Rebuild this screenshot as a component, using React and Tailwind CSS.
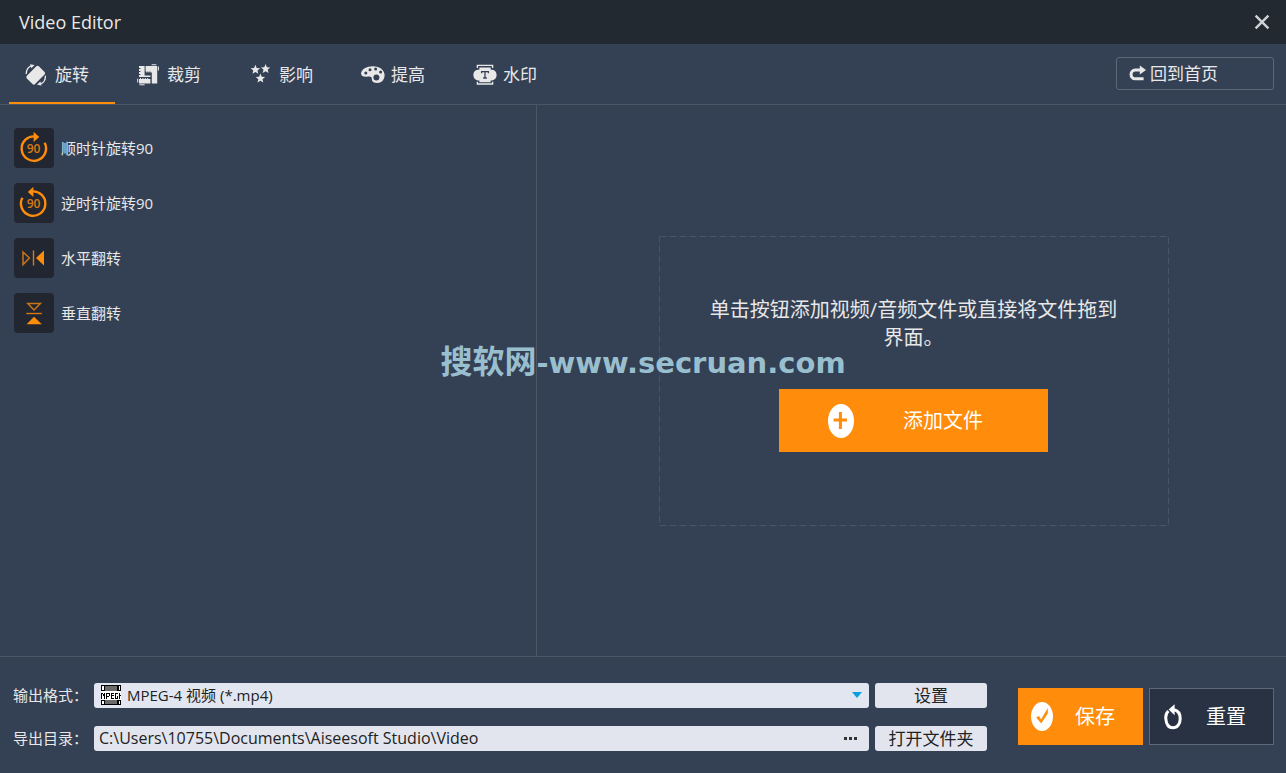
import { useState } from 'react';

const LIGHT = '#e8e8e8';
const ORANGE = '#ff8c0a';

function RotateIcon() {
  return (
    <svg width="22" height="22" viewBox="0 0 22 22" aria-hidden="true">
      <rect x="2.2" y="5.4" width="17" height="11.6" rx="1.8" fill={LIGHT} transform="rotate(-45 10.7 11.2)" />
      <path d="M1.2 10 C1.2 6 3 3 6.5 1.8" fill="none" stroke={LIGHT} strokeWidth="1.3" />
      <path d="M5 .2 L9.6 1 L6.4 4.2 Z" fill={LIGHT} />
      <path d="M20.4 11.6 C20.6 15.6 18.6 18.8 15.4 20" fill="none" stroke={LIGHT} strokeWidth="1.3" />
      <path d="M16.6 21.6 L12 20.8 L15.4 17.6 Z" fill={LIGHT} />
    </svg>
  );
}

function CropIcon() {
  return (
    <svg width="22" height="22" viewBox="0 0 22 22" fill={LIGHT} aria-hidden="true">
      <path d="M2 2 H7.6 V11.6 H13.4 V13 H2 V11 H3.4 V10 H2 V8 H3.4 V7 H2 V5 H3.4 V4 H2 Z" />
      <path d="M2 15 H3 V14 H4 V15 H5.4 V14 H6.4 V15 H7.8 V14 H8.8 V15 H10.2 V14 H11.2 V15 H13.4 V19.6 H2 Z" />
      <path d="M8.6 2 H20.2 V19.6 H14.8 V8.6 H13.4 V7.4 H12.4 V8.4 H11.4 V7.4 H10.4 V8.4 H9.4 V7.4 H8.6 Z" />
      <path d="M14.6 .2 H19.4 V1.2 H14.6 Z M20.9 2.4 H21.9 V6.4 H20.9 Z M.2 14.8 H1.2 V18.6 H.2 Z M2.4 20.2 H7.6 V21.2 H2.4 Z" />
    </svg>
  );
}

function StarsIcon() {
  const star = 'M0 -4.8 L1.3 -1.6 L4.7 -1.4 L2.1 .8 L2.9 4.2 L0 2.4 L-2.9 4.2 L-2.1 .8 L-4.7 -1.4 L-1.3 -1.6 Z';
  return (
    <svg width="22" height="22" viewBox="0 0 22 22" fill={LIGHT} aria-hidden="true">
      <path d={star} transform="translate(6.4 5.6)" />
      <path d={star} transform="translate(16.6 4.8)" />
      <path d={star} transform="translate(11.4 14.4)" />
    </svg>
  );
}

function PaletteIcon() {
  return (
    <svg width="24" height="22" viewBox="0 0 24 22" aria-hidden="true">
      <path
        d="M0 9.6 C.4 5.2 5.6 2.2 12 2.2 C18.8 2.2 23.6 6.2 23.6 11 C23.6 16 20.2 19 16.4 19 C12.6 19 10.8 17.4 10.8 15 C10.8 12.8 9.6 12.2 7 12.6 C3.4 13.2 .2 12.6 0 9.6 Z"
        fill={LIGHT}
      />
      <g fill="#344054">
        <circle cx="4.8" cy="9" r="1.5" />
        <circle cx="9" cy="5.8" r="1.5" />
        <circle cx="14.6" cy="5" r="1.5" />
        <circle cx="19.6" cy="8" r="1.5" />
        <circle cx="15.4" cy="13.4" r="3" />
      </g>
    </svg>
  );
}

function StampIcon() {
  return (
    <svg width="24" height="22" viewBox="0 0 24 22" aria-hidden="true">
      <path d="M4.4 4 V1.4 H9 M15 1.4 H19.6 V4 M9 1.4 H15" fill="none" stroke={LIGHT} strokeWidth="1.4" />
      <path d="M6.4 3.6 H17.6 V5.4 C22 5.4 23.6 8.2 23.6 11 C23.6 13.8 22 16.6 17.6 16.6 V18.2 H6.4 V16.6 C2 16.6 .4 13.8 .4 11 C.4 8.2 2 5.4 6.4 5.4 Z" fill={LIGHT} />
      <path d="M4.4 17.8 V20 H19.6 V17.8" fill="none" stroke={LIGHT} strokeWidth="1.4" />
      <path d="M8.6 9.2 V7.6 H15.4 V9.2 M12 7.6 V14 M10.2 14 H13.8" fill="none" stroke="#344054" strokeWidth="1.3" />
    </svg>
  );
}

function Rotate90Icon({ reverse }) {
  return (
    <svg width="40" height="40" viewBox="0 0 40 40" aria-hidden="true">
      <g transform={reverse ? 'translate(39 0) scale(-1 1)' : undefined}>
        <path d="M21.5 8.5 A12.2 12.2 0 1 0 30.6 14.8" fill="none" stroke={ORANGE} strokeWidth="2.4" />
        <path d="M19.6 3.8 L25.2 8.9 L19.6 14 Z" fill={ORANGE} />
      </g>
      <text x="19.5" y="25" textAnchor="middle" fontSize="12" fontWeight="600" fontFamily="Open Sans, sans-serif" fill="#d97a12">
        90
      </text>
    </svg>
  );
}

function FlipHorizontalIcon() {
  return (
    <svg width="40" height="40" viewBox="0 0 40 40" aria-hidden="true">
      <path d="M9 14 L15.4 20 L9 26.6 Z" fill="none" stroke="#c97417" strokeWidth="1.5" />
      <path d="M19.5 12.4 V27.6" stroke="#d97a12" strokeWidth="1.4" />
      <path d="M30 12.4 V27.4 L22 20 Z" fill={ORANGE} />
    </svg>
  );
}

function FlipVerticalIcon() {
  return (
    <svg width="40" height="40" viewBox="0 0 40 40" aria-hidden="true">
      <path d="M13.8 10.6 H26.4 L20 17 Z" fill="none" stroke="#c97417" strokeWidth="1.5" />
      <path d="M12.4 20.5 H27.8" stroke="#d97a12" strokeWidth="1.4" />
      <path d="M12.6 31.2 H27.8 L20 23.8 Z" fill={ORANGE} />
    </svg>
  );
}

function MpegIcon() {
  return (
    <svg width="20" height="20" viewBox="0 0 20 20" shapeRendering="crispEdges" aria-hidden="true">
      <path d="M0 0H20V20H0Z" fill="#000" />
      <path d="M4 1H16V6H4Z M4 15H16V19H4Z" fill="#6b6b6b" />
      <path d="M1 1H3V5H1Z M18 1H19V5H18Z M1 16H3V19H1Z M18 16H19V19H18Z" fill="#fff" />
      <path d="M0 6H20V15H0Z" fill="#fff" />
      <path
        d="M0 8H1V14H0Z M1 8H2V9H1Z M2 9H3V11H2Z M3 8H4V14H3Z M5 8H6V14H5Z M6 8H8V9H6Z M8 8H9V11H8Z M6 11H8V12H6Z M10 8H11V14H10Z M11 8H13V9H11Z M11 10H13V11H11Z M11 13H13V14H11Z M14 8H15V14H14Z M15 8H17V9H15Z M15 13H17V14H15Z M16 11H17V13H16Z M18 8H19V14H18Z M19 10H20V11H19Z"
        fill="#000"
      />
    </svg>
  );
}

function ReturnIcon() {
  return (
    <svg width="18" height="18" viewBox="0 0 18 18" aria-hidden="true">
      <path d="M12 5 H6.4 C.6 5 .6 13.8 6.4 13.8 H14.6" fill="none" stroke={LIGHT} strokeWidth="3" />
      <path d="M10.8 .4 L17 5 L10.8 9.6 Z" fill={LIGHT} />
    </svg>
  );
}

function CloseIcon() {
  return (
    <svg width="16" height="16" viewBox="0 0 16 16" aria-hidden="true">
      <path d="M1.6 1.6 L14.4 14.4 M14.4 1.6 L1.6 14.4" stroke="#d0d3d6" strokeWidth="2.4" />
    </svg>
  );
}

function PlusIcon() {
  return (
    <svg width="26" height="34" viewBox="0 0 26 34" aria-hidden="true">
      <ellipse cx="13" cy="17" rx="13" ry="17" fill="#fff" />
      <path d="M5.6 16 H19 M12.4 8 V25" stroke={ORANGE} strokeWidth="3" />
    </svg>
  );
}

function CheckIcon() {
  return (
    <svg width="22" height="29" viewBox="0 0 22 29" aria-hidden="true">
      <ellipse cx="11" cy="14.5" rx="11" ry="14.5" fill="#fff" />
      <path d="M5.2 15.4 L8 14 L10 17.4 L16.8 6 V11.4 L10.2 21.6 Z" fill={ORANGE} />
    </svg>
  );
}

function ResetIcon() {
  return (
    <svg width="18" height="26" viewBox="0 0 18 26" aria-hidden="true">
      <path d="M4.4 7 C1.8 9.4 1.6 12.4 1.8 14.6 C2.2 20.4 5 23.8 9 23.8 C13.4 23.8 16.2 19.8 16.2 14.8 C16.2 10 14 6.6 10 5.8" fill="none" stroke="#fff" strokeWidth="3" />
      <path d="M10.6 .2 V11.2 L4.6 5.6 Z" fill="#fff" />
    </svg>
  );
}

const TABS = [
  { id: 'rotate', label: '旋转', Icon: RotateIcon },
  { id: 'crop', label: '裁剪', Icon: CropIcon },
  { id: 'effect', label: '影响', Icon: StarsIcon },
  { id: 'enhance', label: '提高', Icon: PaletteIcon },
  { id: 'watermark', label: '水印', Icon: StampIcon },
];

const ACTIONS = [
  { label: '顺时针旋转90', icon: <Rotate90Icon /> },
  { label: '逆时针旋转90', icon: <Rotate90Icon reverse /> },
  { label: '水平翻转', icon: <FlipHorizontalIcon /> },
  { label: '垂直翻转', icon: <FlipVerticalIcon /> },
];

export default function App() {
  const [tab, setTab] = useState('rotate');
  const [folder, setFolder] = useState('C:\\Users\\10755\\Documents\\Aiseesoft Studio\\Video');

  return (
    <div className="relative flex min-h-screen flex-col bg-[#344054] font-['Open_Sans','Noto_Sans_CJK_SC',sans-serif] text-[#e8e8e8]">
      <header className="flex h-11 items-center justify-between bg-[#222930] pr-3.5 pl-[19px]">
        <h1 className="text-lg">Video Editor</h1>
        <button type="button" aria-label="Close" className="p-0.5">
          <CloseIcon />
        </button>
      </header>

      <nav className="flex h-[61px] items-stretch justify-between border-b border-[#4a5566] pr-3 pl-[9px]">
        <div className="flex gap-1.5">
          {TABS.map(({ id, label, Icon }) => (
            <button
              key={id}
              type="button"
              onClick={() => setTab(id)}
              className={`flex w-[106px] items-center border-b-2 pt-1 pl-4 text-[17px] ${
                tab === id ? 'border-[#ff8c0a]' : 'border-transparent'
              }`}
            >
              <span className="flex w-[30px] items-center">
                <Icon />
              </span>
              {label}
            </button>
          ))}
        </div>
        <button
          type="button"
          className="mt-[13px] flex h-[33px] w-[158px] items-center gap-[3px] rounded-[3px] border border-[#5d6778] pl-3 text-[17px]"
        >
          <ReturnIcon />
          回到首页
        </button>
      </nav>

      <main className="flex flex-1">
        <section className="flex w-[537px] shrink-0 flex-col items-start gap-[15px] border-r border-[#4a5566] px-3.5 pt-[23px]">
          {ACTIONS.map(({ label, icon }) => (
            <button key={label} type="button" className="flex items-center gap-[7px] text-[15px]">
              <span className="rounded bg-[#212630]">{icon}</span>
              {label}
            </button>
          ))}
        </section>

        <section className="flex flex-1 items-center justify-center pt-px pl-1">
          <div className="relative flex h-[290px] w-[510px] flex-col items-center pt-[60px]">
            <svg className="absolute inset-0 size-full" aria-hidden="true">
              <rect x="0.5" y="0.5" width="509" height="289" fill="none" stroke="#495467" strokeDasharray="7 3" />
            </svg>
            <p className="relative w-[420px] text-center text-xl leading-7">
              单击按钮添加视频/音频文件或直接将文件拖到界面。
            </p>
            <button type="button" className="relative mt-[37px] flex h-[63px] w-[269px] items-center gap-[49px] bg-[#ff8c0a] pl-[49px] text-xl text-white">
              <PlusIcon />
              添加文件
            </button>
          </div>
        </section>
      </main>

      <footer className="flex h-[117px] items-center gap-[31px] border-t border-[#4a5566] pt-[3px] pr-3 pl-[13px]">
        <div className="grid flex-1 grid-cols-[75px_1fr_112px] items-center gap-x-1.5 gap-y-[18px]">
          <label htmlFor="format" className="text-[15px] leading-[25px]">
            输出格式：
          </label>
          <div className="relative flex h-[25px] items-center">
            <select
              id="format"
              className="h-full w-full appearance-none rounded-[3px] bg-[#e1e6f1] pl-[33px] text-[15px] leading-[25px] text-[#222]"
            >
              <option>MPEG-4 视频 (*.mp4)</option>
            </select>
            <span className="pointer-events-none absolute left-[7px]">
              <MpegIcon />
            </span>
            <svg className="pointer-events-none absolute right-[7px]" width="10" height="6" viewBox="0 0 10 6" aria-hidden="true">
              <path d="M0 0 H10 L5 6 Z" fill="#0a9fe0" />
            </svg>
          </div>
          <button type="button" className="h-[25px] rounded-[3px] bg-[#e3e5ee] text-[17px] leading-[25px] text-[#222]">
            设置
          </button>

          <label htmlFor="folder" className="text-[15px] leading-[25px]">
            导出目录：
          </label>
          <div className="flex h-[25px] items-center rounded-[3px] bg-[#e3e5ee] pr-3 pl-[5px] text-[#222]">
            <input
              id="folder"
              value={folder}
              onChange={(e) => setFolder(e.target.value)}
              className="h-full min-w-0 flex-1 bg-transparent text-base outline-none"
            />
            <button type="button" aria-label="Browse" className="flex h-full items-center gap-0.5">
              <span className="size-[3px] bg-[#333]" />
              <span className="size-[3px] bg-[#333]" />
              <span className="size-[3px] bg-[#333]" />
            </button>
          </div>
          <button type="button" className="h-[25px] rounded-[3px] bg-[#e3e5ee] text-[17px] leading-[25px] text-[#222]">
            打开文件夹
          </button>
        </div>

        <div className="flex gap-1.5 text-xl text-white">
          <button type="button" className="flex h-[57px] w-[125px] items-center gap-[22px] bg-[#ff8c0a] pl-[13px]">
            <CheckIcon />
            保存
          </button>
          <button type="button" className="flex h-[57px] w-[125px] items-center gap-6 border border-[#5d6778] bg-[#293242] pl-3.5">
            <ResetIcon />
            重置
          </button>
        </div>
      </footer>

      <div className="pointer-events-none absolute inset-x-0 top-[339px] text-center font-['Noto_Sans_CJK_SC',sans-serif] text-[32px] leading-10 font-bold text-[#99bfcf]">
        搜软网<span className="font-['DejaVu_Sans',sans-serif] text-[29px]">-www.secruan.com</span>
      </div>
    </div>
  );
}
